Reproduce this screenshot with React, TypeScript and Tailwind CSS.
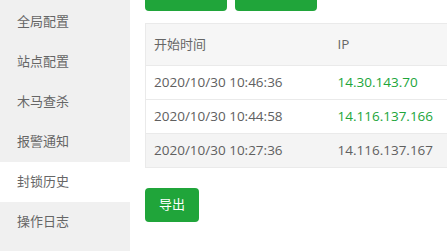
import React from 'react';

const menu = ['全局配置', '站点配置', '木马查杀', '报警通知', '封锁历史', '操作日志'];
const active = '封锁历史';

const rows = [
  { time: '2020/10/30 10:46:36', ip: '14.30.143.70', green: true },
  { time: '2020/10/30 10:44:58', ip: '14.116.137.166', green: true },
  { time: '2020/10/30 10:27:36', ip: '14.116.137.167', green: false },
];

export default function App() {
  return (
    <div
      className="flex w-[447px] h-[251px] overflow-hidden bg-white text-[13px] text-[#666]"
      style={{ fontFamily: '"Open Sans", "Noto Sans CJK SC", sans-serif' }}
    >
      {/* side menu */}
      <div className="w-[130px] shrink-0 bg-[#f0f0f0] pt-[2px]">
        {menu.map((m) => (
          <div
            key={m}
            className={`h-[40px] flex items-center pl-[17px] ${m === active ? 'bg-white' : ''}`}
          >
            {m}
          </div>
        ))}
      </div>

      {/* content */}
      <div className="flex-1 min-w-0 pl-[15px] -mt-[23px]">
        <div className="flex gap-[8px]">
          <div className="w-[82px] h-[34px] rounded-[4px] bg-[#20a53a]" />
          <div className="w-[82px] h-[34px] rounded-[4px] bg-[#20a53a]" />
        </div>

        <table className="mt-[12px] w-[400px] border-collapse border border-[#eaeaea]">
          <thead>
            <tr className="h-[42px] bg-[#f6f6f6]">
              <th className="w-[184px] text-left font-normal pl-[8px]">开始时间</th>
              <th className="text-left font-normal pl-[8px] text-[13.5px]">IP</th>
            </tr>
          </thead>
          <tbody>
            {rows.map((r, i) => (
              <tr
                key={r.time}
                className={`h-[34px] border-t border-[#eaeaea] text-[13.5px] text-[#606060] ${i === 2 ? 'bg-[#f4f4f4]' : ''}`}
              >
                <td className="pl-[8px] whitespace-nowrap">{r.time}</td>
                <td className={`pl-[8px] whitespace-nowrap ${r.green ? 'text-[#20a53a]' : ''}`}>
                  {r.ip}
                </td>
              </tr>
            ))}
          </tbody>
        </table>

        <button className="mt-[20px] w-[54px] h-[34px] rounded-[4px] bg-[#20a53a] text-white text-[13px]">
          导出
        </button>
      </div>
    </div>
  );
}
